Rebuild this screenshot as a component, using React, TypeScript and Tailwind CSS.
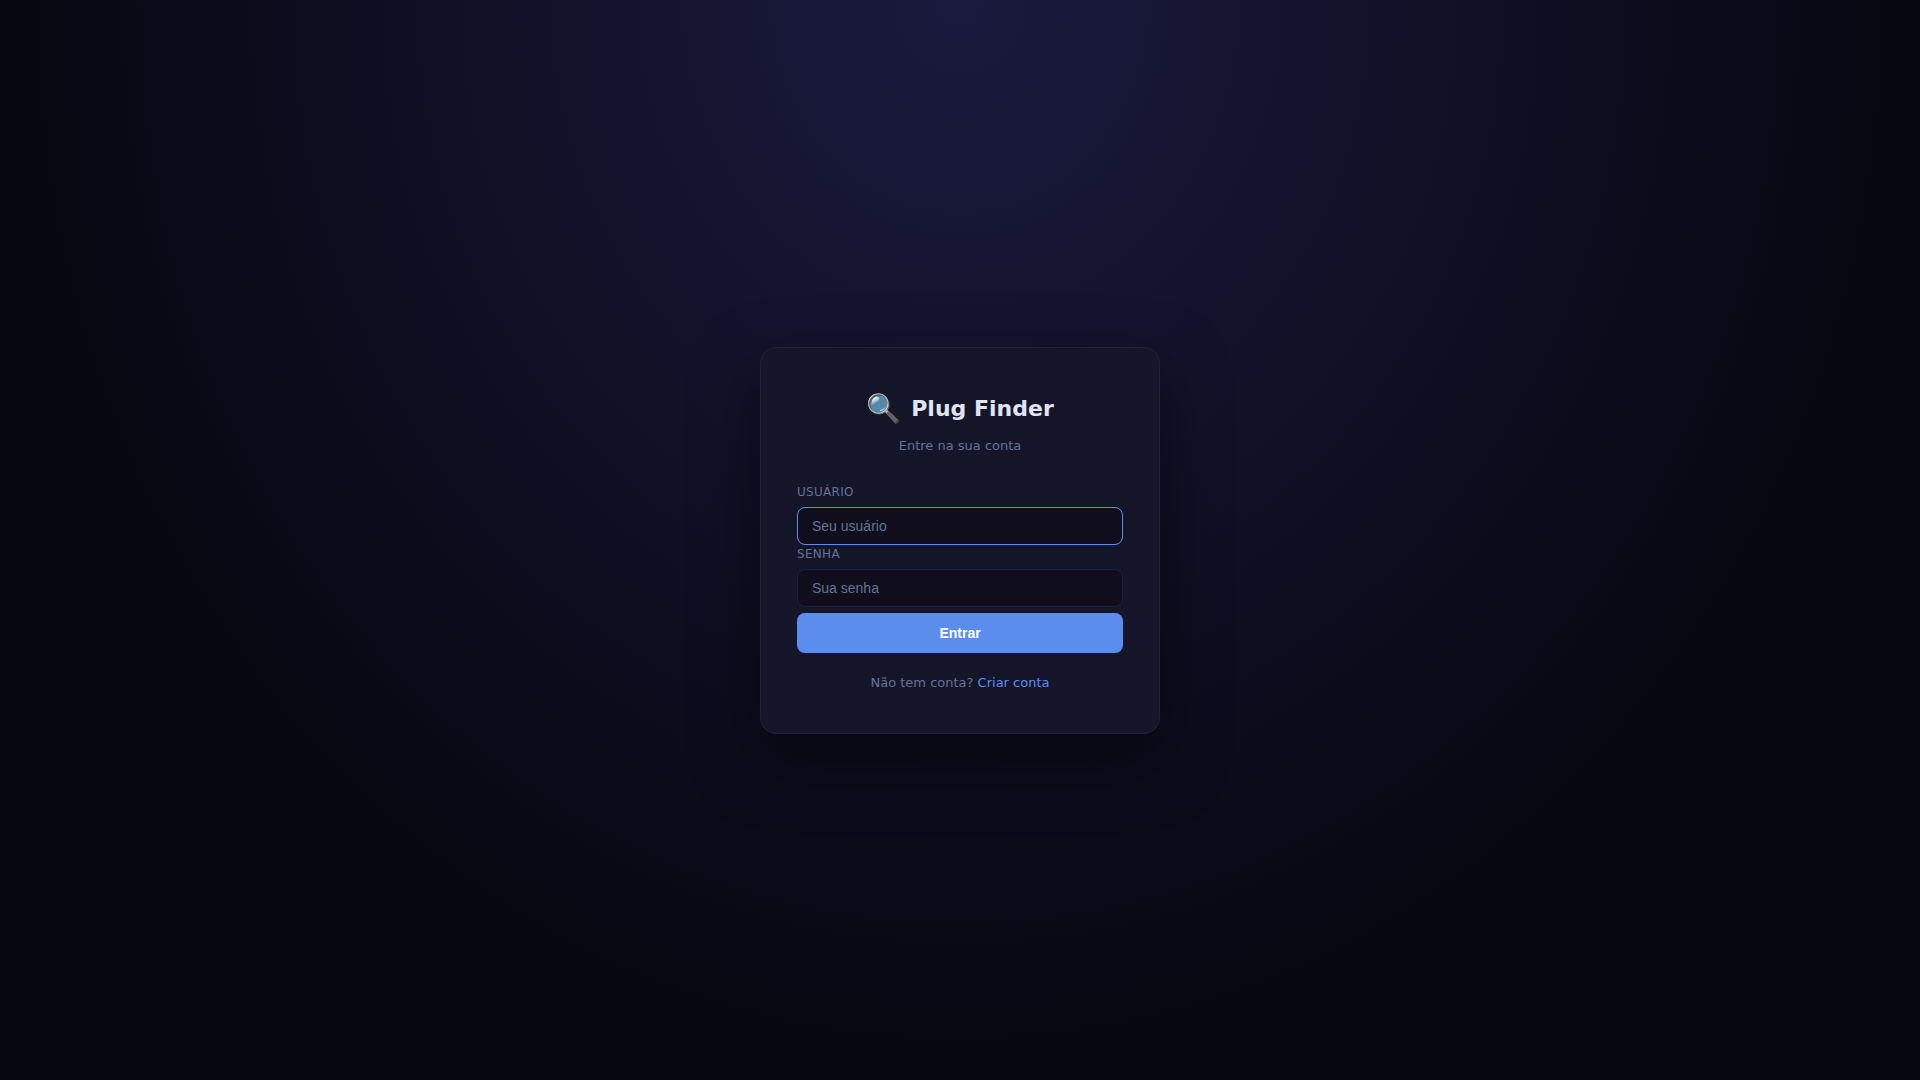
import React, { useState } from 'react';

interface FieldProps {
  id: string;
  label: string;
  type: string;
  placeholder: string;
  value: string;
  autoFocus?: boolean;
  onChange: (value: string) => void;
}

const Field: React.FC<FieldProps> = ({ id, label, type, placeholder, value, autoFocus, onChange }) => (
  <div className="flex flex-col">
    <label htmlFor={id} className="mb-1.5 text-xs leading-[18px] tracking-wide uppercase text-[#647296]">
      {label}
    </label>
    <input
      id={id}
      type={type}
      placeholder={placeholder}
      value={value}
      autoFocus={autoFocus}
      onChange={(e) => onChange(e.target.value)}
      className="w-full rounded-lg border border-[#22203e] bg-[#100e1c] px-3.5 py-2.5 font-['Liberation_Sans',sans-serif] text-sm leading-4 text-[#e0e4f5] placeholder:text-[#647296] outline-none focus:border-[#5b8dee]"
    />
  </div>
);

export default function App() {
  const [username, setUsername] = useState('');
  const [password, setPassword] = useState('');

  return (
    <main className="flex min-h-screen items-center justify-center bg-[radial-gradient(ellipse_at_50%_0%,#1a1a3e_0%,#070711_70%)] font-['DejaVu_Sans',sans-serif]">
      <div className="w-full max-w-[400px] rounded-2xl border border-[#22203e] bg-[#15152a] px-9 py-10 shadow-[0_24px_64px_rgba(0,0,0,0.5)]">
        <div className="mb-1.5 flex items-center justify-center gap-2.5">
          <span className="text-[28px] leading-[42px]">🔍</span>
          <h1 className="text-[22px] leading-8 font-bold text-[#e0e4f5]">Plug Finder</h1>
        </div>
        <p className="mb-7 text-center text-[13px] leading-[19px] text-[#647296]">Entre na sua conta</p>

        <form onSubmit={(e) => e.preventDefault()}>
          <Field
            id="username"
            label="Usuário"
            type="text"
            placeholder="Seu usuário"
            value={username}
            autoFocus
            onChange={setUsername}
          />
          <Field
            id="password"
            label="Senha"
            type="password"
            placeholder="Sua senha"
            value={password}
            onChange={setPassword}
          />
          <button
            type="submit"
            className="mt-1.5 w-full cursor-pointer rounded-lg bg-[#5b8dee] py-3 font-['Liberation_Sans',sans-serif] text-sm leading-4 font-bold text-white hover:bg-[#4a7ce0]"
          >
            Entrar
          </button>
        </form>

        <p className="mt-5 text-center text-[13px] leading-5 text-[#647296]">
          Não tem conta?{' '}
          <a href="#criar-conta" className="text-[#5b8dee] hover:underline">
            Criar conta
          </a>
        </p>
      </div>
    </main>
  );
}
